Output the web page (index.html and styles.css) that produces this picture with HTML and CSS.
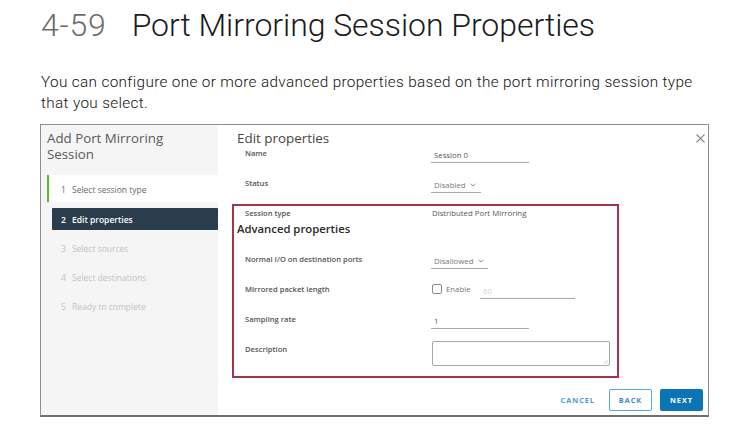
FILE: index.html
```html
<!DOCTYPE html>
<html>
<head>
<meta charset="utf-8">
<link rel="stylesheet" href="styles.css">
</head>
<body>
<h1 class="title"><span class="fig">4-59</span><span class="fig-name">Port Mirroring Session Properties</span></h1>
<p class="intro">You can configure one or more advanced properties based on the port mirroring session type that you select.</p>

<div class="dialog">
  <nav class="wizard-nav">
    <div class="wizard-title">Add Port Mirroring Session</div>
    <ol class="steps">
      <li class="step done"><span class="num">1</span>Select session type</li>
      <li class="step active"><span class="num">2</span>Edit properties</li>
      <li class="step"><span class="num">3</span>Select sources</li>
      <li class="step"><span class="num">4</span>Select destinations</li>
      <li class="step"><span class="num">5</span>Ready to complete</li>
    </ol>
  </nav>
  <section class="content">
    <div class="head">
      <h2 class="page-title">Edit properties</h2>
      <span class="close" aria-label="Close"><svg width="9" height="9" viewBox="0 0 9 9"><path d="M0.5 0.5 L8.5 8.5 M8.5 0.5 L0.5 8.5" stroke="#8a8a8a" stroke-width="1.1" fill="none"/></svg></span>
    </div>
    <div class="form">
      <div class="row">
        <span class="label">Name</span>
        <span class="field w98">Session 0</span>
      </div>
      <div class="row">
        <span class="label">Status</span>
        <span class="field select w50">Disabled <svg class="chev" width="6" height="4" viewBox="0 0 6 4"><path d="M0.5 0.8 L3 3 L5.5 0.8" stroke="#777" stroke-width="0.8" fill="none"/></svg></span>
      </div>
      <div class="highlight">
        <div class="row short">
          <span class="label">Session type</span>
          <span class="plain">Distributed Port Mirroring</span>
        </div>
        <h3 class="adv">Advanced properties</h3>
        <div class="row">
          <span class="label">Normal I/O on destination ports</span>
          <span class="field select w57">Disallowed <svg class="chev" width="6" height="4" viewBox="0 0 6 4"><path d="M0.5 0.8 L3 3 L5.5 0.8" stroke="#777" stroke-width="0.8" fill="none"/></svg></span>
        </div>
        <div class="row">
          <span class="label">Mirrored packet length</span>
          <span class="check"><span class="box"></span>Enable</span>
          <span class="field w95 dim">60</span>
        </div>
        <div class="row">
          <span class="label">Sampling rate</span>
          <span class="field w98">1</span>
        </div>
        <div class="row desc">
          <span class="label">Description</span>
          <span class="textarea"><svg class="grip" width="5" height="5" viewBox="0 0 5 5"><path d="M4.5 1 L1 4.5 M4.5 3 L3 4.5" stroke="#aaa" stroke-width="0.6"/></svg></span>
        </div>
      </div>
    </div>
    <div class="footer">
      <span class="btn link">CANCEL</span>
      <span class="btn outline">BACK</span>
      <span class="btn primary">NEXT</span>
    </div>
  </section>
</div>
</body>
</html>
```

FILE: styles.css
```css
* { box-sizing: border-box; }
body {
  margin: 0;
  background: #fff;
  font-family: Roboto, "Liberation Sans", sans-serif;
  color: #222;
}
.title {
  margin: 0;
  padding: 7px 0 0 41px;
  font-size: 32px;
  line-height: 36px;
  font-weight: 300;
  letter-spacing: -0.05px;
  color: #1a1a1a;
  white-space: nowrap;
}
.fig { color: #6d6d6d; margin-right: 25px; letter-spacing: 0.8px; }
.intro {
  margin: 29px 0 0 41px;
  width: 665px;
  font-size: 15.3px;
  line-height: 21px;
  font-weight: 300;
  color: #111;
  letter-spacing: 0.35px;
}
.dialog {
  margin: 10px 0 0 40px;
  width: 669px;
  height: 293px;
  border: 1px solid #8f8f8f;
  border-bottom: 2px solid #6f6f6f;
  display: flex;
  font-family: "Open Sans", "Liberation Sans", sans-serif;
}
.wizard-nav {
  width: 177px;
  background: #f5f5f5;
  padding: 6px 0 0 6px;
}
.wizard-title {
  font-size: 13.3px;
  line-height: 15.5px;
  color: #5a5a5a;
  width: 140px;
  font-weight: 400;
}
.steps {
  list-style: none;
  margin: 13px 0 0 0;
  padding: 0;
}
.step {
  display: flex;
  align-items: center;
  height: 22px;
  margin-top: 7px;
  margin-left: 5px;
  padding-left: 9px;
  font-size: 8.5px;
  color: #c2c2c2;
}
.step .num { width: 11px; }
.step.done {
  margin-top: 0;
  margin-left: 0;
  height: 27px;
  background: #fff;
  border-left: 2px solid #5fb82e;
  padding-left: 12px;
  padding-top: 2px;
  color: #6a6a6a;
}
.step.done + .step { margin-top: 6px; }
.step.active {
  background: #2b3d4c;
  color: #fff;
  font-weight: 600;
  border-radius: 1px;
}
.content {
  flex: 1;
  display: flex;
  flex-direction: column;
  padding-left: 14px;
}
.head {
  display: flex;
  justify-content: space-between;
  height: 13px;
}
.page-title {
  margin: 4px 0 0 5px;
  font-size: 13.4px;
  line-height: 18px;
  font-weight: 400;
  color: #454545;
}
.close { margin: 9px 3px 0 0; display: flex; }
.form { padding-left: 0; }
.row {
  display: flex;
  align-items: center;
  height: 30px;
  padding-left: 13px;
}
.label {
  width: 187px;
  flex: none;
  font-size: 7.6px;
  font-weight: 600;
  color: #555;
}
.field {
  display: flex;
  align-items: center;
  height: 14px;
  margin-top: 5px;
  padding: 0 0 0 3px;
  margin-left: -1px;
  border-bottom: 1px solid #a8a8a8;
  font-size: 7.8px;
  color: #555;
}
.select { color: #777; }
.chev { margin-left: 4px; }
.w98 { width: 98px; }
.w50 { width: 50px; }
.w57 { width: 57px; }
.w95 { width: 95px; margin-left: -2px; }
.dim { color: #cfcfcf; }
.plain { font-size: 7.8px; color: #555; }
.highlight {
  margin-top: 6px;
  width: 387px;
  height: 174px;
  border: 2px solid #a9314b;
}
.highlight .row { padding-left: 11px; }
.highlight .row.short { height: 13px; }
.adv {
  margin: 0;
  padding-left: 3px;
  height: 20px;
  line-height: 20px;
  font-size: 11.3px;
  font-weight: 600;
  color: #2a2a2a;
}
.highlight .adv + .row { margin-top: 5px; }
.check {
  display: flex;
  align-items: center;
  font-size: 7.8px;
  color: #777;
  width: 50px;
}
.box {
  width: 10px;
  height: 10px;
  border: 1px solid #8a8a8a;
  border-radius: 2px;
  margin-right: 4px;
  background: #fff;
}
.row.desc {
  align-items: flex-start;
  height: 40px;
}
.row.desc .label { margin-top: 10px; }
.textarea {
  position: relative;
  margin-top: 7px;
  width: 178px;
  height: 25px;
  border: 1px solid #a8a8a8;
  border-radius: 2px;
}
.grip { position: absolute; right: 1px; bottom: 1px; }
.footer {
  margin-top: auto;
  margin-bottom: 4px;
  display: flex;
  justify-content: flex-end;
  align-items: center;
  padding-right: 5px;
  gap: 8px;
}
.btn {
  display: flex;
  align-items: center;
  justify-content: center;
  height: 22px;
  font-size: 7.3px;
  font-weight: 700;
  letter-spacing: 1px;
  border-radius: 2px;
}
.btn.link { color: #4b9bd0; padding: 0 6px; margin-right: 0; }
.btn.outline {
  width: 43px;
  border: 1px solid #5aa6d8;
  color: #3d8cc7;
  background: #fff;
}
.btn.primary {
  width: 43px;
  background: #0a74b7;
  color: #fff;
}
```
